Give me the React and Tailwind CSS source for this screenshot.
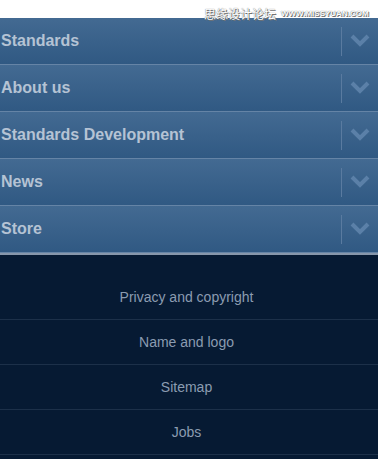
const sections = ['Standards', 'About us', 'Standards Development', 'News', 'Store'];
const footerLinks = ['Privacy and copyright', 'Name and logo', 'Sitemap', 'Jobs'];

const Chevron = () => (
  <svg width="20" height="13" viewBox="0 0 20 13" fill="none">
    <polyline points="2,2 10,10 18,2" stroke="#5b80a8" strokeWidth="4" strokeLinejoin="miter" />
  </svg>
);

const NavRow = ({ label }) => (
  <div className="flex h-[47px] items-center border-b border-[#6584a6] bg-gradient-to-b from-[#436a92] to-[#305983]">
    <span className="flex-1 pl-px text-[16px] font-bold text-[#b5c3d4]">{label}</span>
    <div className="flex h-full items-center">
      <div className="h-[29px] w-px bg-[#5a7ba0]" />
      <div className="flex w-[36px] items-center justify-center pb-px">
        <Chevron />
      </div>
    </div>
  </div>
);

export default function App() {
  return (
    <div className="relative h-[459px] w-[378px] overflow-hidden bg-white font-['Liberation_Sans',Arial,sans-serif]">
      {/* Watermark */}
      <div className="absolute left-[204px] top-[8px] flex w-max items-center gap-[5px] whitespace-nowrap text-white [text-shadow:0_0_1px_#555,1px_1px_0_#777]">
        <span className="font-['Noto_Sans_CJK_SC',sans-serif] text-[12px] leading-none">思缘设计论坛</span>
        <span className="text-[8px] font-bold leading-none">WWW.MISSYUAN.COM</span>
      </div>

      <div className="h-[18px]" />

      <nav>
        {sections.map((s) => (
          <NavRow key={s} label={s} />
        ))}
      </nav>

      <footer className="h-full border-t-2 border-[#8797ab] bg-[#061a33] pt-[20px]">
        {footerLinks.map((l) => (
          <div
            key={l}
            className="flex h-[45px] items-center justify-center border-b border-[#1c3049] pr-[5px] text-[14px] text-[#8b9cb1]"
          >
            {l}
          </div>
        ))}
      </footer>
    </div>
  );
}
